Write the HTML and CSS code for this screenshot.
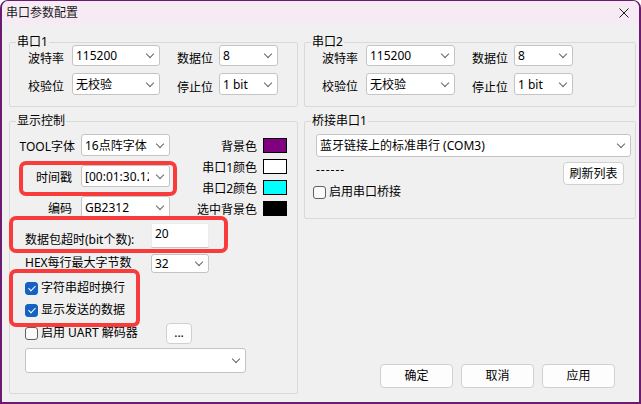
FILE: index.html
```html
<!DOCTYPE html>
<html>
<head>
<meta charset="UTF-8">
<title>串口参数配置</title>
<link rel="stylesheet" href="styles.css">
</head>
<body>
<div class="window">
	<div class="titlebar">
		<span class="title">串口参数配置</span>
		<svg class="close" width="10" height="10" viewBox="0 0 10 10"><path d="M0.5 0.5L9.5 9.5M9.5 0.5L0.5 9.5" stroke="#1a1a1a" stroke-width="1" fill="none"/></svg>
	</div>
	<div class="content">
		<!-- 串口1 -->
		<div class="group port">
			<span class="group-title">串口1</span>
			<div class="port-grid">
				<span class="lbl">波特率</span>
				<div class="combo"><span class="combo-text">115200</span><i class="chev"></i></div>
				<span class="lbl near">数据位</span>
				<div class="combo"><span class="combo-text">8</span><i class="chev"></i></div>
				<span class="lbl">校验位</span>
				<div class="combo"><span class="combo-text">无校验</span><i class="chev"></i></div>
				<span class="lbl near low">停止位</span>
				<div class="combo"><span class="combo-text">1 bit</span><i class="chev"></i></div>
			</div>
		</div>
		<!-- 串口2 -->
		<div class="group port">
			<span class="group-title">串口2</span>
			<div class="port-grid port-grid-2">
				<span class="lbl">波特率</span>
				<div class="combo"><span class="combo-text">115200</span><i class="chev"></i></div>
				<span class="lbl near">数据位</span>
				<div class="combo"><span class="combo-text">8</span><i class="chev"></i></div>
				<span class="lbl">校验位</span>
				<div class="combo"><span class="combo-text">无校验</span><i class="chev"></i></div>
				<span class="lbl near low">停止位</span>
				<div class="combo"><span class="combo-text">1 bit</span><i class="chev"></i></div>
			</div>
		</div>
		<!-- 显示控制 -->
		<div class="group display">
			<span class="group-title">显示控制</span>
			<div class="display-top">
				<div class="font-grid">
					<span class="lbl">TOOL字体</span>
					<div class="combo"><span class="combo-text">16点阵字体</span><i class="chev"></i></div>
					<span class="lbl inset">时间戳</span>
					<div class="combo"><span class="combo-text">[00:01:30.123]</span><i class="chev"></i></div>
					<span class="lbl inset">编码</span>
					<div class="combo"><span class="combo-text">GB2312</span><i class="chev"></i></div>
				</div>
				<div class="colors">
					<span class="clbl">背景色</span><span class="swatch sw-purple"></span>
					<span class="clbl">串口1颜色</span><span class="swatch sw-white"></span>
					<span class="clbl">串口2颜色</span><span class="swatch sw-cyan"></span>
					<span class="clbl">选中背景色</span><span class="swatch sw-black"></span>
				</div>
			</div>
			<div class="field-row timeout">
				<span class="flabel">数据包超时(bit个数):</span>
				<div class="edit">20</div>
			</div>
			<div class="field-row hex">
				<span class="flabel">HEX每行最大字节数</span>
				<div class="combo small"><span class="combo-text">32</span><i class="chev"></i></div>
			</div>
			<div class="check first"><span class="box on"></span><span>字符串超时换行</span></div>
			<div class="check"><span class="box on"></span><span>显示发送的数据</span></div>
			<div class="check uart"><span class="box"></span><span class="uart-text">启用 UART 解码器</span><span class="btn dots">...</span></div>
			<div class="combo long"><span class="combo-text"></span><i class="chev"></i></div>
		</div>
		<!-- 右侧 -->
		<div class="right-col">
			<div class="group bridge">
				<span class="group-title">桥接串口1</span>
				<div class="combo wide"><span class="combo-text">蓝牙链接上的标准串行 (COM3)</span><i class="chev"></i></div>
				<div class="bridge-row">
					<span class="dashes">------</span>
					<span class="btn refresh">刷新列表</span>
				</div>
				<div class="check bridge-check"><span class="box"></span><span>启用串口桥接</span></div>
			</div>
			<div class="actions">
				<span class="btn">确定</span>
				<span class="btn">取消</span>
				<span class="btn">应用</span>
			</div>
		</div>
	</div>
	<!-- 红色标注框 -->
	<div class="mark mark-time"></div>
	<div class="mark mark-timeout"></div>
	<div class="mark mark-checks"></div>
</div>
</body>
</html>
```

FILE: styles.css
```css
body{
	margin:0;
	background:#fff;
	font-family:"Noto Sans","Noto Sans CJK SC",sans-serif;
	font-size:12px;
	line-height:16px;
	color:#000;
}
.window{
	position:relative;
	width:641px;
	height:404px;
	box-sizing:border-box;
	border:solid #6a1b70;
	border-width:1px 2px 2px;
	border-radius:8px 8px 0 0;
	background:#f0f0f0;
	overflow:hidden;
}
.titlebar{
	height:24px;
	display:flex;
	align-items:center;
	justify-content:space-between;
	padding:0 10px 0 4px;
	background:#f6ebf5;
	color:#1a1a1a;
}
.content{
	display:grid;
	grid-template-columns:289px 332px;
	column-gap:6px;
	row-gap:14px;
	padding:17px 0 0 7px;
}
.group{
	position:relative;
	box-sizing:border-box;
	border:1px solid #d9d9d9;
	border-radius:2px;
}
.group-title{
	position:absolute;
	top:-9px;
	left:6px;
	padding:0 1px;
	background:#f0f0f0;
}
.port{
	height:65px;
}
.port-grid{
	display:grid;
	grid-template-columns:62px 88px 59px 59px;
	grid-template-rows:21px 22px;
	row-gap:7px;
	padding-top:2px;
}
.port-grid-2{
	grid-template-columns:61px 89px 59px 59px;
}
.lbl{
	text-align:right;
	padding-right:8px;
	padding-top:6px;
	white-space:nowrap;
}
.lbl.near{
	padding-right:6px;
}
.lbl.low{
	padding-top:7px;
}
.combo{
	display:flex;
	align-items:center;
	box-sizing:border-box;
	background:#fff;
	border:1px solid #c4c4c4;
	border-radius:3px;
	padding:1px 0 0 3px;
	overflow:hidden;
}
.combo-text{
	flex:1;
	min-width:0;
	overflow:hidden;
	white-space:nowrap;
}
.chev{
	flex:none;
	width:5px;
	height:5px;
	border-right:1px solid #666;
	border-bottom:1px solid #666;
	transform:rotate(45deg);
	margin:0 6px 4px 8px;
}
.display{
	height:273px;
	padding:12px 10px 0 0;
}
.display-top{
	display:flex;
	justify-content:space-between;
}
.font-grid{
	display:grid;
	grid-template-columns:71px 89px;
	grid-auto-rows:22px;
	row-gap:9px;
}
.font-grid .lbl{
	padding-right:6px;
	padding-top:5px;
}
.font-grid .lbl.inset{
	padding-right:9px;
}
.colors{
	display:grid;
	grid-template-columns:auto 24px;
	grid-auto-rows:15px;
	gap:6px;
	margin-top:4px;
}
.clbl{
	text-align:right;
	padding-top:1px;
	white-space:nowrap;
}
.swatch{
	box-sizing:border-box;
	border:1px solid #000;
}
.sw-purple{ background:#800080; }
.sw-white{ background:#fff; }
.sw-cyan{ background:#00ffff; }
.sw-black{ background:#000; }
.field-row{
	display:flex;
	margin-left:15px;
}
.flabel{
	width:126px;
	white-space:nowrap;
}
.timeout{
	margin-top:5px;
}
.timeout .flabel{
	padding-top:9px;
}
.edit{
	box-sizing:border-box;
	width:58px;
	height:25px;
	background:#fff;
	border:1px solid #ececec;
	border-bottom-color:#c6c6c6;
	padding:2px 0 0 3px;
}
.hex{
	margin-top:6px;
}
.hex .flabel{
	padding-top:1px;
}
.combo.small{
	width:58px;
	height:19px;
}
.check{
	display:flex;
	align-items:center;
	height:22px;
	margin-left:15px;
}
.check.first{
	margin-top:4px;
}
.check.uart{
	margin-top:1px;
}
.box{
	position:relative;
	flex:none;
	box-sizing:border-box;
	width:13px;
	height:13px;
	margin-right:3px;
	border:1px solid #5f5f5f;
	border-radius:3px;
	background:#fafafa;
}
.box.on{
	background:#1462c1;
	border-color:#1462c1;
}
.box.on::after{
	content:"";
	position:absolute;
	left:4px;
	top:1px;
	width:3px;
	height:6px;
	border:solid #fff;
	border-width:0 1px 1px 0;
	transform:rotate(45deg);
}
.uart-text{
	width:125px;
	white-space:nowrap;
}
.btn{
	display:flex;
	align-items:center;
	justify-content:center;
	box-sizing:border-box;
	width:73px;
	height:24px;
	border:1px solid #d0d0d0;
	border-radius:4px;
	background:#fdfdfd;
}
.btn.dots{
	width:26px;
	height:21px;
}
.combo.long{
	width:221px;
	height:25px;
	margin:4px 0 0 15px;
}
.right-col{
	display:flex;
	flex-direction:column;
}
.bridge{
	height:98px;
	padding:12px 0 0 8px;
}
.combo.wide{
	width:315px;
	height:23px;
	margin-left:3px;
}
.bridge-row{
	display:flex;
	justify-content:space-between;
	width:315px;
	margin:5px 0 0 3px;
}
.dashes{
	letter-spacing:1px;
}
.btn.refresh{
	width:61px;
	height:23px;
	margin-right:7px;
}
.bridge-check{
	height:14px;
	margin-left:0;
}
.actions{
	display:flex;
	justify-content:flex-end;
	gap:8px;
	margin-top:auto;
	margin-bottom:6px;
	padding-right:21px;
}
.mark{
	position:absolute;
	box-sizing:border-box;
	border:4px solid #f83b3b;
	border-radius:7px;
}
.mark-time{
	left:17px;
	top:160px;
	width:158px;
	height:35px;
}
.mark-timeout{
	left:7px;
	top:215px;
	width:219px;
	height:37px;
}
.mark-checks{
	left:7px;
	top:268px;
	width:131px;
	height:58px;
}
```
